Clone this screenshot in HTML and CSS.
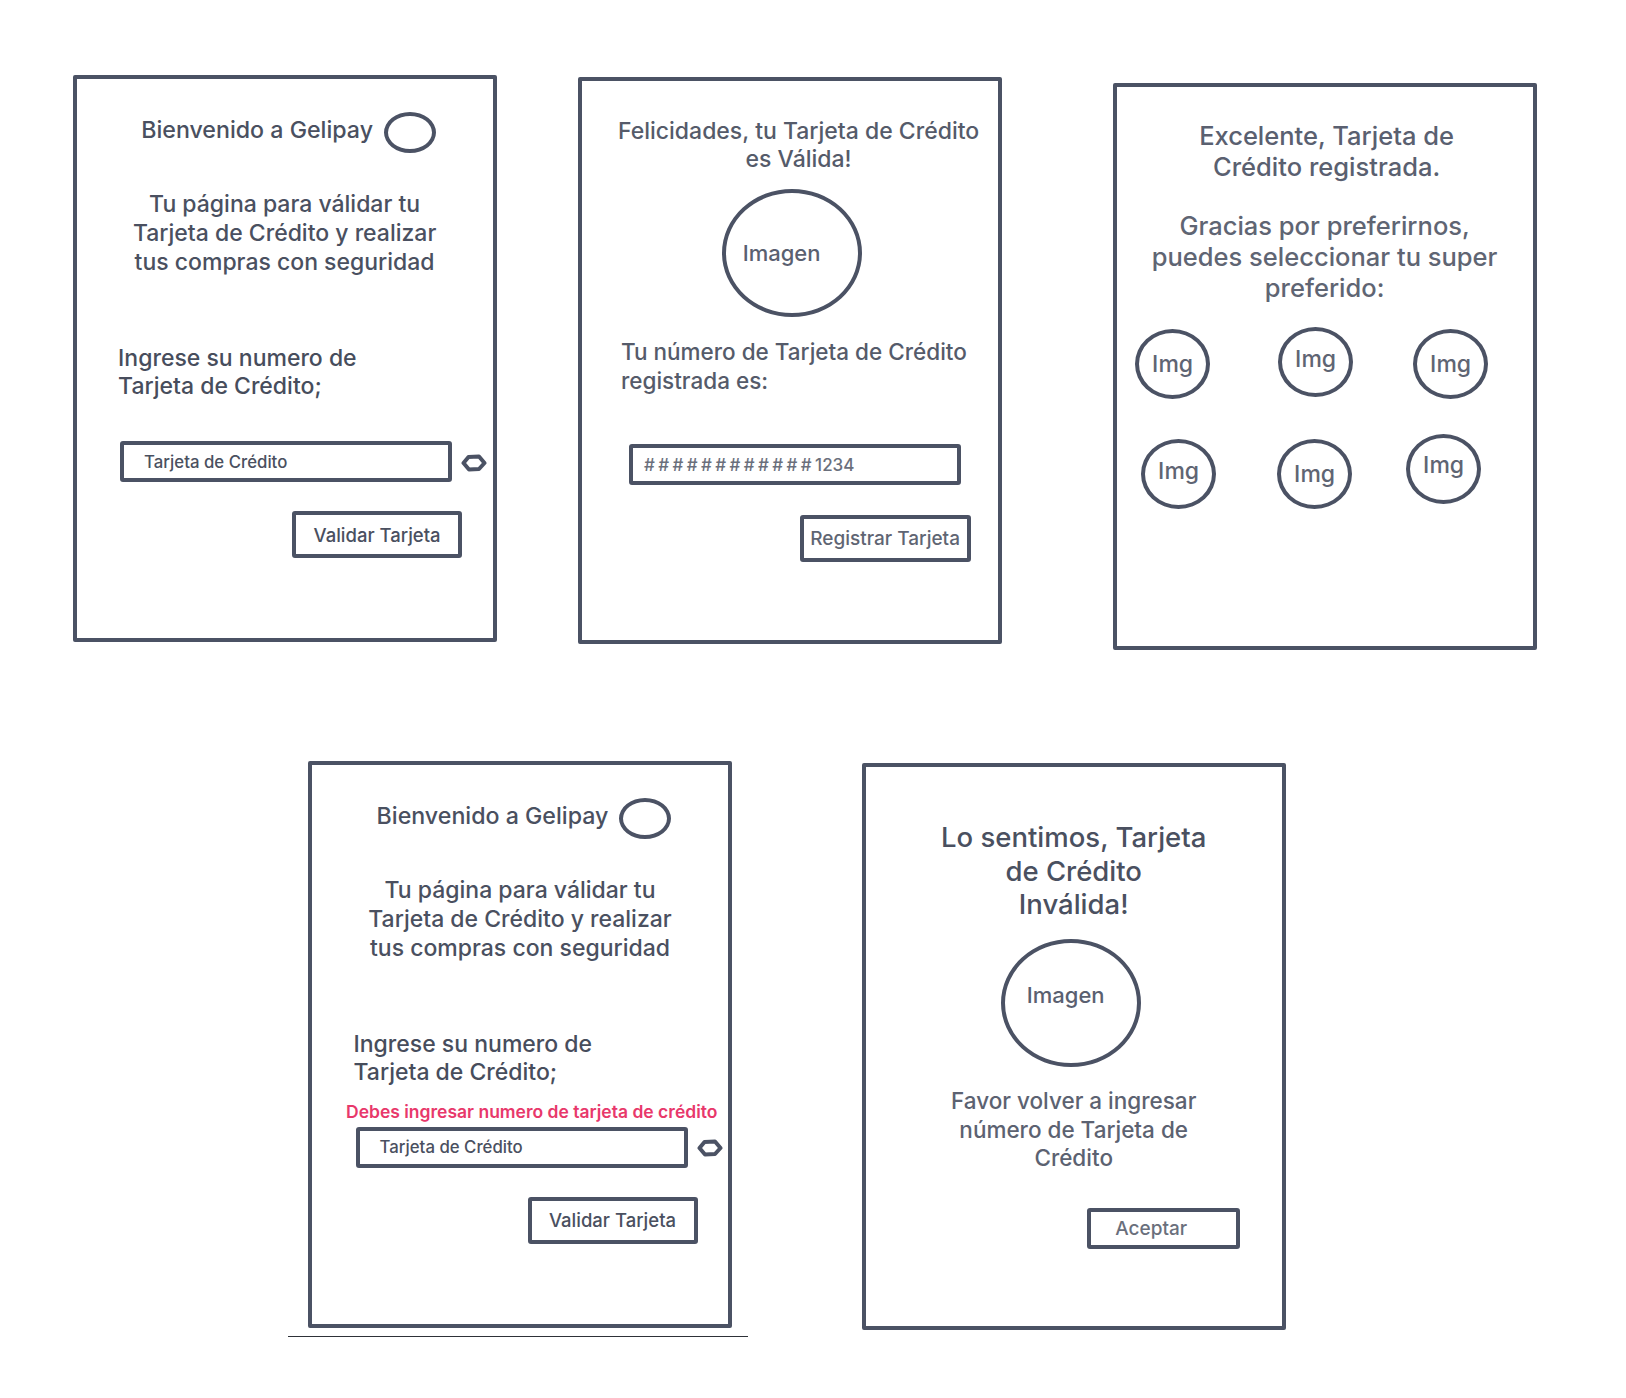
FILE: index.html
```html
<!DOCTYPE html>
<html lang="es">
<head>
<meta charset="utf-8">
<title>Gelipay - Wireframes</title>
<link rel="stylesheet" href="styles.css">
</head>
<body>
<div class="board">
  <div class="row row-top">
    <section class="panel p-login">
      <div class="title-row">
        <span class="title">Bienvenido a Gelipay</span>
        <span class="logo-oval"></span>
      </div>
      <p class="intro">Tu página para válidar tu<br>Tarjeta de Crédito y realizar<br>tus compras con seguridad</p>
      <p class="label">Ingrese su numero de<br>Tarjeta de Crédito;</p>
      <div class="field-row">
        <div class="field">Tarjeta de Crédito</div>
        <svg class="eye" width="26" height="18" viewBox="0 0 26 18"><path d="M2.5 9 L7.5 3 L18 2.5 L23.5 9 L18 15 L8 15.5 Z" fill="none" stroke="#4b5264" stroke-width="4" stroke-linejoin="round"/></svg>
      </div>
      <div class="btn-row"><div class="btn btn-validate">Validar Tarjeta</div></div>
    </section>

    <section class="panel p-valid">
      <p class="valid-head">Felicidades, tu Tarjeta de Crédito<br>es Válida!</p>
      <div class="img-circle ic-valid"><span>Imagen</span></div>
      <p class="valid-text">Tu número de Tarjeta de Crédito<br>registrada es:</p>
      <div class="field field-masked"><span class="mask">############</span>1234</div>
      <div class="btn-row btn-row-valid"><div class="btn btn-register">Registrar Tarjeta</div></div>
    </section>

    <section class="panel p-registered">
      <p class="reg-head">Excelente, Tarjeta de<br>Crédito registrada.</p>
      <p class="reg-text">Gracias por preferirnos,<br>puedes seleccionar tu super<br>preferido:</p>
      <div class="store-grid">
        <div class="store s1">Img</div>
        <div class="store s2">Img</div>
        <div class="store s3">Img</div>
        <div class="store s4">Img</div>
        <div class="store s5">Img</div>
        <div class="store s6">Img</div>
      </div>
    </section>
  </div>

  <div class="row row-bottom">
    <div class="underlined">
      <section class="panel p-login">
        <div class="title-row">
          <span class="title">Bienvenido a Gelipay</span>
          <span class="logo-oval"></span>
        </div>
        <p class="intro">Tu página para válidar tu<br>Tarjeta de Crédito y realizar<br>tus compras con seguridad</p>
        <p class="label">Ingrese su numero de<br>Tarjeta de Crédito;</p>
        <p class="error">Debes ingresar numero de tarjeta de crédito</p>
        <div class="field-row tight">
          <div class="field">Tarjeta de Crédito</div>
          <svg class="eye" width="26" height="18" viewBox="0 0 26 18"><path d="M2.5 9 L7.5 3 L18 2.5 L23.5 9 L18 15 L8 15.5 Z" fill="none" stroke="#4b5264" stroke-width="4" stroke-linejoin="round"/></svg>
        </div>
        <div class="btn-row"><div class="btn btn-validate">Validar Tarjeta</div></div>
      </section>
    </div>

    <section class="panel p-invalid">
      <p class="inv-head">Lo sentimos, Tarjeta<br>de Crédito<br>Inválida!</p>
      <div class="img-circle ic-invalid"><span>Imagen</span></div>
      <p class="inv-text">Favor volver a ingresar<br>número de Tarjeta de<br>Crédito</p>
      <div class="btn-row btn-row-invalid"><div class="btn btn-accept">Aceptar</div></div>
    </section>
  </div>
</div>
</body>
</html>
```

FILE: styles.css
```css
* { box-sizing: border-box; }

body {
  margin: 0;
  background: #ffffff;
  font-family: Inter, "Open Sans", "Liberation Sans", sans-serif;
  font-weight: 500;
  color: #4a5060;
}

p { margin: 0; }

.board { padding-top: 75px; }

.row { display: flex; align-items: flex-start; }

.row-top { padding-left: 72.6px; }

.row-bottom { margin-top: 111px; padding-left: 288px; }

.panel {
  flex: none;
  width: 424px;
  height: 567px;
  border: 4px solid #4b5264;
  border-radius: 2px;
  background: #fff;
}

.p-valid { margin-left: 81px; margin-top: 2px; }
.p-registered { margin-left: 111px; margin-top: 8px; }
.p-invalid { margin-left: 113.7px; margin-top: 2px; }

.underlined {
  padding: 0 16px 8px 20px;
  border-bottom: 1px solid #2e3138;
}

/* ---------- login panel ---------- */
.p-login { padding-top: 33px; }

.title-row {
  display: flex;
  align-items: center;
  justify-content: center;
  gap: 11px;
  padding-left: 8px;
  height: 41px;
}

.title {
  font-size: 23.2px;
  line-height: 29px;
  margin-top: -5px;
  color: #4a5060;
}

.logo-oval {
  width: 52px;
  height: 41px;
  border: 4px solid #4b5264;
  border-radius: 50%;
}

.intro {
  margin-top: 36.5px;
  font-size: 23px;
  line-height: 29px;
  text-align: center;
  color: #4a5060;
}

.label {
  margin-top: 67px;
  padding-left: 41.5px;
  font-size: 23px;
  line-height: 28px;
  color: #474d5c;
}

.error {
  margin-top: 15px;
  padding-left: 34px;
  font-size: 17.5px;
  line-height: 22px;
  font-weight: 600;
  color: #e8386b;
}

.field-row {
  display: flex;
  align-items: center;
  gap: 9px;
  margin-top: 41.5px;
  padding-left: 43.5px;
}

.field-row.tight { margin-top: 4.4px; }

.field {
  width: 332px;
  height: 41px;
  border: 4px solid #4b5264;
  border-radius: 3px;
  display: flex;
  align-items: center;
  padding-left: 20px;
  font-size: 16.8px;
  color: #4a5060;
}

.eye { flex: none; margin-top: 2px; }

.btn-row {
  display: flex;
  justify-content: flex-end;
  margin-top: 29px;
  padding-right: 30.5px;
}

.btn {
  display: flex;
  align-items: center;
  justify-content: center;
  border: 4px solid #4b5264;
  border-radius: 3px;
  color: #4a5060;
}

.btn-validate {
  width: 170px;
  height: 47px;
  font-size: 18.5px;
}

/* ---------- valid panel ---------- */
.p-valid { padding-top: 36px; }

.valid-head {
  font-size: 23px;
  line-height: 28px;
  text-align: center;
  padding-left: 18px;
  color: #555b6a;
}

.img-circle {
  width: 140px;
  height: 128px;
  border: 4px solid #4b5264;
  border-radius: 50%;
  display: flex;
  align-items: center;
  justify-content: center;
  font-size: 22px;
  color: #5a6070;
}

.ic-valid { margin: 16px 0 0 140px; padding-right: 20px; }

.valid-text {
  margin-top: 19.5px;
  padding-left: 39.4px;
  font-size: 22.5px;
  line-height: 29px;
  color: #555b6a;
}

.field-masked {
  margin: 49.5px 0 0 47.4px;
  padding-left: 11px;
  font-size: 17px;
  color: #6a6f7c;
}

.mask { letter-spacing: 3.4px; }

.btn-row-valid { margin-top: 30px; padding-right: 27px; }

.btn-register {
  width: 171px;
  height: 47px;
  font-size: 19px;
  color: #5f6573;
}

/* ---------- registered panel ---------- */
.p-registered { padding-top: 32.5px; }

.reg-head {
  font-size: 25.5px;
  line-height: 31px;
  text-align: center;
  padding-left: 4px;
  color: #5a6070;
}

.reg-text {
  margin-top: 28px;
  font-size: 25.5px;
  line-height: 31px;
  text-align: center;
  color: #5f6573;
}

.store-grid {
  display: grid;
  grid-template-columns: repeat(3, 75px);
  column-gap: 63px;
  row-gap: 40px;
  margin-top: 26.5px;
  padding-left: 18.5px;
}

.store {
  width: 75px;
  height: 70px;
  border: 4px solid #4b5264;
  border-radius: 50%;
  display: flex;
  align-items: center;
  justify-content: center;
  font-size: 23px;
  color: #5f6573;
}

.s2 { margin: -2px 0 0 5px; padding-bottom: 6px; }
.s3 { margin-left: 2px; }
.s4 { margin-left: 6px; padding-bottom: 6px; }
.s5 { margin-left: 4px; }
.s6 { margin: -5px 0 0 -5px; padding-bottom: 8px; }

/* ---------- invalid panel ---------- */
.p-invalid { padding-top: 54px; }

.inv-head {
  font-size: 27.5px;
  line-height: 33.5px;
  text-align: center;
  color: #4a5060;
}

.ic-invalid {
  margin: 17.75px 0 0 135px;
  padding: 0 10px 16px 0;
}

.inv-text {
  margin-top: 20px;
  font-size: 22.5px;
  line-height: 28.5px;
  text-align: center;
  color: #5c6271;
}

.btn-row-invalid { margin-top: 34.75px; padding-right: 42px; }

.btn-accept {
  width: 153px;
  height: 41px;
  font-size: 19px;
  padding-right: 24px;
  color: #6a6f7c;
}
```
